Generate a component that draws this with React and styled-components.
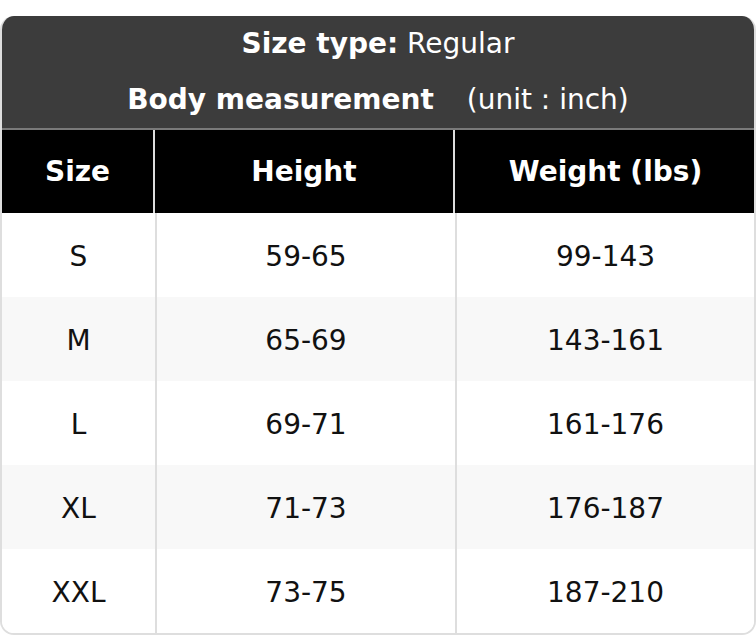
import React from 'react';
import styled, { createGlobalStyle } from 'styled-components';

const GlobalStyle = createGlobalStyle`
  html, body {
    margin: 0;
    padding: 0;
    background: #ffffff;
  }
  body {
    font-family: 'DejaVu Sans', 'Liberation Sans', sans-serif;
  }
`;

const Card = styled.div`
  margin-top: 16px;
  width: 756px;
  box-sizing: border-box;
  border-radius: 14px;
  overflow: hidden;
  border: 2px solid #dedede;
  border-top: none;
`;

const Caption = styled.div`
  background-color: #3c3c3c;
  color: #fff;
  font-size: 28px;
  text-align: center;
  border-bottom: 2px solid #7a7a7a;
  margin: 0 -2px;
`;

const CaptionLine = styled.div`
  height: 56px;
  line-height: 56px;
`;

const Strong = styled.span`
  font-weight: bold;
`;

const Unit = styled.span`
  margin-left: 33px;
`;

const Row = styled.div`
  display: grid;
  grid-template-columns: 153px 300px 1fr;
  height: ${p => (p.head ? '83px' : '84px')};
  background-color: ${p => (p.head ? '#000' : p.striped ? '#f8f8f8' : '#fff')};
  color: ${p => (p.head ? '#fff' : '#111')};
  font-weight: ${p => (p.head ? 'bold' : 'normal')};
  margin: ${p => (p.head ? '0 -2px 0 -2px' : '0')};
`;

const Cell = styled.div`
  display: flex;
  align-items: center;
  justify-content: center;
  font-size: 28px;
  padding-top: 2px;
  & + & {
    border-left: 2px solid ${p => (p.head ? '#8a8a8a' : '#dedede')};
  }
`;

const HeadCell = styled(Cell)`
  padding-top: 0;
  &:first-child {
    padding-left: 2px;
  }
`;

const data = [
  ['S', '59-65', '99-143'],
  ['M', '65-69', '143-161'],
  ['L', '69-71', '161-176'],
  ['XL', '71-73', '176-187'],
  ['XXL', '73-75', '187-210'],
];

const App = () => {
  return (
    <>
      <GlobalStyle />
      <Card>
        <Caption>
          <CaptionLine>
            <Strong>Size type:</Strong> Regular
          </CaptionLine>
          <CaptionLine>
            <Strong>Body measurement</Strong>
            <Unit>(unit : inch)</Unit>
          </CaptionLine>
        </Caption>
        <Row head>
          <HeadCell head>Size</HeadCell>
          <HeadCell head>Height</HeadCell>
          <HeadCell head>Weight (lbs)</HeadCell>
        </Row>
        {data.map((r, i) => (
          <Row key={r[0]} striped={i % 2 === 1}>
            <Cell>{r[0]}</Cell>
            <Cell>{r[1]}</Cell>
            <Cell>{r[2]}</Cell>
          </Row>
        ))}
      </Card>
    </>
  );
};

export default App;
